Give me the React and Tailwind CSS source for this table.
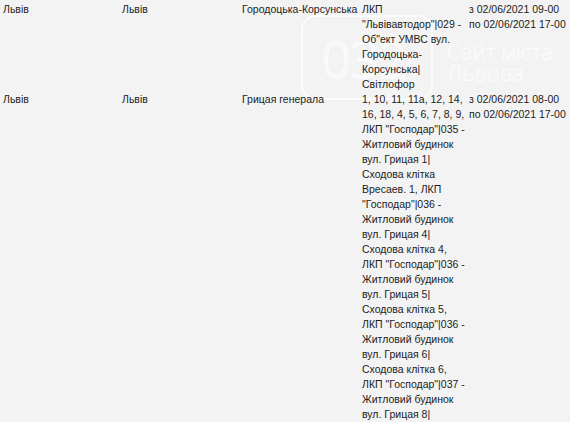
import React from 'react';

const rows = [
    {
        region: 'Львів',
        city: 'Львів',
        street: 'Городоцька-Корсунська',
        objects: [
            'ЛКП',
            '"Львівавтодор"|029 -',
            'Об"ект УМВС вул.',
            'Городоцька-',
            'Корсунська|',
            'Світлофор',
        ],
        time: ['з 02/06/2021 09-00', 'по 02/06/2021 17-00'],
    },
    {
        region: 'Львів',
        city: 'Львів',
        street: 'Грицая генерала',
        objects: [
            '1, 10, 11, 11а, 12, 14,',
            '16, 18, 4, 5, 6, 7, 8, 9,',
            'ЛКП "Господар"|035 -',
            'Житловий будинок',
            'вул. Грицая 1|',
            'Сходова клітка',
            'Вресаев. 1, ЛКП',
            '"Господар"|036 -',
            'Житловий будинок',
            'вул. Грицая 4|',
            'Сходова клітка 4,',
            'ЛКП "Господар"|036 -',
            'Житловий будинок',
            'вул. Грицая 5|',
            'Сходова клітка 5,',
            'ЛКП "Господар"|036 -',
            'Житловий будинок',
            'вул. Грицая 6|',
            'Сходова клітка 6,',
            'ЛКП "Господар"|037 -',
            'Житловий будинок',
            'вул. Грицая 8|',
        ],
        time: ['з 02/06/2021 08-00', 'по 02/06/2021 17-00'],
    },
];

// faint site watermark, sits behind the table text
const Watermark = () => (
    <svg className="absolute left-0 top-0 pointer-events-none" width="570" height="130" viewBox="0 0 570 130">
        <rect x="302" y="16" width="130" height="83" rx="14" fill="none" stroke="#ffffff" strokeOpacity="0.75" strokeWidth="2" />
        <text x="322" y="78" fill="none" stroke="#ffffff" strokeOpacity="0.75" strokeWidth="1.5" fontSize="50" fontWeight="300" fontFamily="'Open Sans', 'Liberation Sans', sans-serif">032</text>
        <text x="447" y="60" fill="#ffffff" fillOpacity="0.8" fontSize="22" fontWeight="300" fontFamily="'Open Sans', 'Liberation Sans', sans-serif">Сайт міста</text>
        <text x="447" y="81" fill="#ffffff" fillOpacity="0.8" fontSize="22" fontWeight="300" fontFamily="'Open Sans', 'Liberation Sans', sans-serif">Львова</text>
    </svg>
);

const App = () => {
    return (
        <div className="relative w-[570px] h-[422px] overflow-hidden bg-[#f3f3f3] text-[#1c1c1c] text-[10.5px] leading-[15px] font-['Liberation_Sans',Arial,sans-serif]">
            <Watermark />
            <div className="relative pt-[2px] pl-[3px]">
                {rows.map((row, i) => (
                    <div key={i} className="flex">
                        <div className="w-[119px] shrink-0">{row.region}</div>
                        <div className="w-[120px] shrink-0">{row.city}</div>
                        <div className="w-[120px] shrink-0 whitespace-nowrap">{row.street}</div>
                        <div className="w-[107px] shrink-0 whitespace-nowrap">
                            {row.objects.map((line, j) => (
                                <div key={j}>{line}</div>
                            ))}
                        </div>
                        <div className="flex-1 whitespace-nowrap">
                            {row.time.map((line, j) => (
                                <div key={j}>{line}</div>
                            ))}
                        </div>
                    </div>
                ))}
            </div>
        </div>
    );
};

export default App;
